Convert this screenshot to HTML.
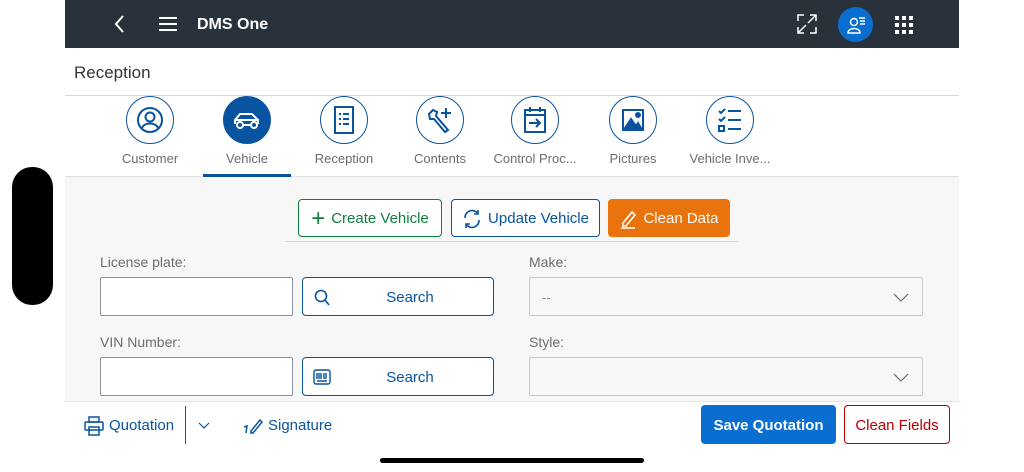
<!DOCTYPE html>
<html><head><style>
*{box-sizing:border-box;margin:0;padding:0}
body{width:1024px;height:472px;position:relative;background:#fff;font-family:"Liberation Sans",sans-serif;overflow:hidden}
.a{position:absolute}
.hdr{left:65px;top:0;width:894px;height:48px;background:#29313a}
.tab{position:absolute;top:96px;width:96px;text-align:center;font-size:13px;color:#6a6d70}
.circ{width:48px;height:48px;border:1.5px solid #0854a0;border-radius:50%;margin:0 auto 7px;display:flex;align-items:center;justify-content:center;background:#fff}
.btn{position:absolute;border-radius:4px;font-size:15px;display:flex;align-items:center;justify-content:center;gap:6px}
.lbl{position:absolute;font-size:14px;color:#6a6d70}
.inp{position:absolute;background:#fff;border:1px solid #89919a;border-radius:2px}
.sel{position:absolute;background:#f7f7f7;border:1px solid #c6cacd;border-radius:2px}
</style></head><body>
<div class="a" style="left:12px;top:167px;width:41px;height:138px;background:#000;border-radius:20px"></div>
<div class="a hdr"></div>
<svg class="a" style="left:112px;top:14px" width="16" height="20"><path d="M11 2 L4 10 L11 18" stroke="#fff" stroke-width="2" fill="none"/></svg>
<svg class="a" style="left:158px;top:15px" width="20" height="18"><path d="M1 3H19M1 9H19M1 15H19" stroke="#fff" stroke-width="2"/></svg>
<div class="a" style="left:197px;top:16px;color:#fff;font-weight:bold;font-size:16px">DMS One</div>
<svg class="a" style="left:797px;top:14px" width="20" height="20" fill="none" stroke="#fff" stroke-width="1.5"><path d="M1 7V1H7M13 1H19V7M19 1L11 9M1 13V19H7M13 19H19V13M1 19L9 11"/></svg>
<div class="a" style="left:838px;top:7px;width:35px;height:35px;border-radius:50%;background:#0a6ed1"></div>
<svg class="a" style="left:846px;top:15px" width="20" height="20" fill="none" stroke="#fff" stroke-width="1.5"><circle cx="8" cy="7" r="3.5"/><path d="M2 18C2 12 14 12 14 18Z"/><path d="M13 3H19M14 6H19M14 9H19"/></svg>
<svg class="a" style="left:895px;top:16px" width="18" height="18" fill="#fff"><rect x="0" y="0" width="4" height="4"/><rect x="7" y="0" width="4" height="4"/><rect x="14" y="0" width="4" height="4"/><rect x="0" y="7" width="4" height="4"/><rect x="7" y="7" width="4" height="4"/><rect x="14" y="7" width="4" height="4"/><rect x="0" y="14" width="4" height="4"/><rect x="7" y="14" width="4" height="4"/><rect x="14" y="14" width="4" height="4"/></svg>
<div class="a" style="left:65px;top:48px;width:894px;height:48px;background:#fff;border-bottom:1px solid #d9d9d9"></div>
<div class="a" style="left:74px;top:63px;font-size:17px;color:#32363a">Reception</div>
<div class="a" style="left:65px;top:97px;width:894px;height:80px;background:#fff;border-bottom:1px solid #e0e0e0"></div>
<div class="a" style="left:65px;top:177px;width:894px;height:224px;background:#f7f7f7"></div>
<div class="tab" style="left:102px"><div class="circ"><svg width="28" height="28" fill="none" stroke="#0854a0" stroke-width="2"><circle cx="14" cy="14" r="12"/><circle cx="14" cy="11" r="4.5"/><path d="M6 22C8 16 20 16 22 22"/></svg></div>Customer</div>
<div class="tab" style="left:199px"><div class="circ" style="background:#0854a0"><svg width="30" height="22" fill="none" stroke="#fff" stroke-width="2"><path d="M3 15V11L8 5H20L26 11V15"/><circle cx="8" cy="16" r="3"/><circle cx="22" cy="16" r="3"/><path d="M11 16H19M3 11H27"/></svg></div>Vehicle</div>
<div class="a" style="left:203px;top:174px;width:88px;height:3px;background:#0854a0"></div>
<div class="tab" style="left:296px"><div class="circ"><svg width="22" height="28" fill="none" stroke="#0854a0" stroke-width="2"><rect x="2" y="1" width="18" height="26"/><path d="M6 8H8M10 8H16M6 13H8M10 13H16M6 18H8M10 18H16"/></svg></div>Reception</div>
<div class="tab" style="left:392px"><div class="circ"><svg width="28" height="28" fill="none" stroke="#0854a0" stroke-width="2"><path d="M3 8L7 4L11 6L10 10L22 24L19 26L8 13L4 13Z"/><path d="M20 2V12M15 7H25"/></svg></div>Contents</div>
<div class="tab" style="left:485px;width:100px"><div class="circ"><svg width="24" height="28" fill="none" stroke="#0854a0" stroke-width="2"><rect x="2" y="4" width="20" height="22"/><path d="M2 9H22M7 1V6M17 1V6M6 17H17M13 13L17 17L13 21"/></svg></div>Control Proc...</div>
<div class="tab" style="left:585px"><div class="circ"><svg width="24" height="24" fill="none" stroke="#0854a0" stroke-width="2"><rect x="2" y="2" width="20" height="20"/><path d="M4 20L10 11L15 18L17 15L20 20Z" fill="#0854a0"/><circle cx="17" cy="7" r="2" fill="#0854a0"/></svg></div>Pictures</div>
<div class="tab" style="left:676px;width:108px"><div class="circ"><svg width="26" height="26" fill="none" stroke="#0854a0" stroke-width="2"><path d="M2 4L4 6L8 2M2 12L4 14L8 10M11 4H24M11 13H24M11 22H24"/><rect x="2" y="19" width="5" height="5"/></svg></div>Vehicle Inve...</div>
<div class="btn" style="left:298px;top:199px;width:144px;height:38px;background:#fff;border:1px solid #107e3e;color:#107e3e;padding-top:1px"><span style="font-size:24px;font-weight:300;line-height:1">+</span>Create Vehicle</div>
<div class="btn" style="left:451px;top:199px;width:149px;height:38px;background:#fff;border:1px solid #0854a0;color:#0854a0;padding-top:1px"><svg width="20" height="20" fill="none" stroke="#0854a0" stroke-width="1.6"><path d="M3 9A7 7 0 0 1 16 5M17 11A7 7 0 0 1 4 15M16 1V5H12M4 19V15H8"/></svg>Update Vehicle</div>
<div class="btn" style="left:608px;top:199px;width:122px;height:38px;background:#e9730c;color:#fff;padding-top:1px"><svg width="18" height="20" fill="none" stroke="#fff" stroke-width="1.6"><path d="M4 14L13 3L16 6L7 17H4ZM2 19H16"/></svg>Clean Data</div>
<div class="a" style="left:285px;top:241px;width:453px;height:1px;background:#d9d9d9"></div>
<div class="lbl" style="left:100px;top:254px">License plate:</div>
<div class="inp" style="left:100px;top:277px;width:193px;height:39px"></div>
<div class="btn" style="left:302px;top:277px;width:192px;height:39px;background:#fff;border:1px solid #0854a0;color:#0854a0;padding-left:24px;padding-top:2px"><svg class="a" style="left:11px;top:11px" width="16" height="18" fill="none" stroke="#0854a0" stroke-width="1.6"><circle cx="7" cy="7" r="5.5"/><path d="M11 11L15 16"/></svg>Search</div>
<div class="lbl" style="left:529px;top:254px">Make:</div>
<div class="sel" style="left:529px;top:277px;width:394px;height:39px"><span class="a" style="left:12px;top:12px;color:#888;font-size:13px">--</span><svg class="a" style="left:363px;top:15px" width="16" height="10" fill="none" stroke="#6a6d70" stroke-width="1.2"><path d="M1 1L8 8L15 1"/></svg></div>
<div class="lbl" style="left:100px;top:334px">VIN Number:</div>
<div class="inp" style="left:100px;top:357px;width:193px;height:39px"></div>
<div class="btn" style="left:302px;top:357px;width:192px;height:39px;background:#fff;border:1px solid #0854a0;color:#0854a0;padding-left:24px;padding-top:2px"><svg class="a" style="left:10px;top:11px" width="18" height="16" fill="none" stroke="#0854a0" stroke-width="1.4"><rect x="1" y="1" width="16" height="14" rx="2"/><path d="M4 4V10M6 4V10M8 4V10M11 4V10M13 4V10M4 12H14"/></svg>Search</div>
<div class="lbl" style="left:529px;top:334px">Style:</div>
<div class="sel" style="left:529px;top:357px;width:394px;height:39px"><svg class="a" style="left:363px;top:15px" width="16" height="10" fill="none" stroke="#6a6d70" stroke-width="1.2"><path d="M1 1L8 8L15 1"/></svg></div>
<div class="a" style="left:65px;top:401px;width:894px;height:47px;background:#fff;border-top:1px solid #e5e5e5"></div>
<svg class="a" style="left:84px;top:416px" width="20" height="20" fill="none" stroke="#0854a0" stroke-width="1.5"><rect x="5" y="1" width="10" height="5"/><rect x="1" y="6" width="18" height="8" rx="1"/><rect x="5" y="11" width="10" height="8"/></svg>
<div class="a" style="left:109px;top:417px;font-size:15px;color:#0854a0">Quotation</div>
<div class="a" style="left:185px;top:406px;width:1px;height:38px;background:#0854a0"></div>
<svg class="a" style="left:198px;top:422px" width="12" height="8" fill="none" stroke="#0854a0" stroke-width="1.2"><path d="M1 1L6 6L11 1"/></svg>
<svg class="a" style="left:243px;top:417px" width="20" height="18" fill="none" stroke="#0854a0" stroke-width="1.5"><path d="M8 14L17 3L19 5L10 16H8ZM1 10L4 9L3 16"/></svg>
<div class="a" style="left:268px;top:417px;font-size:15px;color:#0854a0">Signature</div>
<div class="btn" style="left:701px;top:405px;width:135px;height:39px;background:#0a6ed1;color:#fff;font-weight:bold;padding-top:2px">Save Quotation</div>
<div class="btn" style="left:844px;top:405px;width:106px;height:39px;background:#fff;border:1px solid #bb0000;color:#bb0000;padding-top:2px">Clean Fields</div>
<div class="a" style="left:380px;top:458px;width:264px;height:5px;border-radius:3px;background:#000"></div>
</body></html>
